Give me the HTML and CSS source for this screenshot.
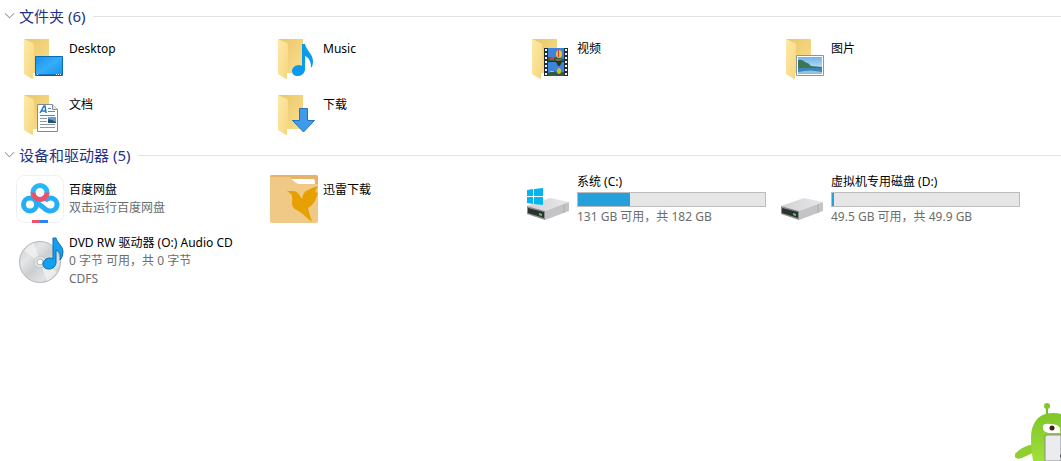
FILE: index.html
```html
<!DOCTYPE html>
<html lang="zh-CN">
<head>
  <meta charset="UTF-8">
  <meta name="viewport" content="width=device-width, initial-scale=1.0">
  <title>此电脑</title>
  <link rel="stylesheet" href="styles.css">
</head>
<body>
  <!-- 共用图形 -->
  <svg class="defs" width="0" height="0" aria-hidden="true">
    <defs>
      <linearGradient id="gBack" x1="0" y1="0" x2="1" y2="1">
        <stop offset="0" stop-color="#e9c566"/>
        <stop offset="1" stop-color="#fbdf8f"/>
      </linearGradient>
      <linearGradient id="gFlap" x1="0" y1="0" x2="1" y2="1">
        <stop offset="0" stop-color="#fdeaa9"/>
        <stop offset="1" stop-color="#f6d67c"/>
      </linearGradient>
      <linearGradient id="gBlue" x1="0" y1="0" x2="1" y2="1">
        <stop offset="0" stop-color="#1590ea"/>
        <stop offset="0.5" stop-color="#35aef8"/>
        <stop offset="1" stop-color="#1391ee"/>
      </linearGradient>
      <linearGradient id="gDisc" x1="0" y1="0" x2="1" y2="1">
        <stop offset="0" stop-color="#c4c7c9"/>
        <stop offset="0.3" stop-color="#e4e5e6"/>
        <stop offset="0.5" stop-color="#cccfd0"/>
        <stop offset="0.75" stop-color="#e0e2e3"/>
        <stop offset="1" stop-color="#adb1b3"/>
      </linearGradient>
      <linearGradient id="gDrive" x1="0" y1="0" x2="1" y2="0">
        <stop offset="0" stop-color="#d2d2d4"/>
        <stop offset="1" stop-color="#e8e8ea"/>
      </linearGradient>
      <linearGradient id="gSky" x1="0" y1="0" x2="0" y2="1">
        <stop offset="0" stop-color="#6fb4ea"/>
        <stop offset="1" stop-color="#e2f2fa"/>
      </linearGradient>
      <linearGradient id="gGreen" x1="0" y1="0" x2="0" y2="1">
        <stop offset="0" stop-color="#7fc62a"/>
        <stop offset="1" stop-color="#a0e038"/>
      </linearGradient>
    </defs>
    <symbol id="folder" viewBox="0 0 48 48">
      <path d="M8 5h25v34H8z" fill="url(#gBack)"/>
      <path d="M8 5l9 4q1 0 1 2v25q0 2-1 3v5q0 1-1 1l-8-5z" fill="url(#gFlap)"/>
    </symbol>
    <symbol id="drive" viewBox="0 0 48 48">
      <path d="M3 31l23-8 19 4-24 9z" fill="url(#gDrive)"/>
      <path d="M21 36l24-9v9l-24 9z" fill="#c4c4c7"/>
      <path d="M40 29v9" stroke="#aeaeb1" fill="none"/>
      <path d="M3 31l18 5v9L3 39z" fill="#8b8d8e"/>
      <path d="M4 33l16 4v6L4 38z" fill="#2b3330"/>
      <path d="M15 38l3 1v2l-3-1z" fill="#4fd66c"/>
    </symbol>
  </svg>

  <main>
    <details class="group" open>
      <summary>
        <svg class="arrow" viewBox="0 0 12 8"><path d="M1 1l5 5 5-5"/></svg>
        <span>文件夹 (6)</span>
      </summary>
      <ul class="items folders">
        <li><a class="item" href="#desktop">
          <svg class="icon" viewBox="0 0 48 48">
            <use href="#folder"/>
            <path d="M19.500 22.500h27v19h-27z" fill="url(#gBlue)" stroke="#0b6ab5"/>
            <path d="M20 41h26" stroke="#0f4f8a" fill="none"/>
            <path d="M21 40.500h2M40 40.500h5" stroke="#fff" stroke-dasharray="1 1" fill="none"/>
          </svg>
          <span class="text"><span class="name">Desktop</span></span>
        </a></li>
        <li><a class="item" href="#music">
          <svg class="icon" viewBox="0 0 48 48">
            <use href="#folder"/>
            <path d="M32 10h3c1 6 8 10 8 17q0 5-2 7c0-7-2-10-6-12v13c0 4-3 7-7 7-4 0-6-2-6-5s3-6 7-6q2 0 3 1z" fill="#0b9bee"/>
          </svg>
          <span class="text"><span class="name">Music</span></span>
        </a></li>
        <li><a class="item" href="#videos">
          <svg class="icon" viewBox="0 0 48 48">
            <use href="#folder"/>
            <path d="M20 14h24v28H20z" fill="#222a33"/>
            <path d="M24 14h16v13H24zM24 28h16v14H24z" fill="#3c83dc"/>
            <path d="M24 23l5 1 3-1 8 2v2H24zM24 39l6-2 4 2 6-1v4H24z" fill="#315d3a"/>
            <ellipse cx="35" cy="20" rx="3" ry="4" fill="#e9c52d"/>
            <path d="M34 16h1v7h-1zM26 24h4v2h-4z" fill="#d8372f"/>
            <path d="M31 25h7l-2 2h-3z" fill="#8c6a2c"/>
            <path d="M32 28h6l-2 4h-2z" fill="#243b32"/>
            <ellipse cx="35" cy="37" rx="2" ry="3" fill="#d7b82b"/>
            <path d="M26 37h4v1h-4z" fill="#e3c134"/>
            <path d="M22 15v27M42 15v27" stroke="#f3f5f7" stroke-width="2" stroke-dasharray="2 2" fill="none"/>
          </svg>
          <span class="text"><span class="name">视频</span></span>
        </a></li>
        <li><a class="item" href="#pictures">
          <svg class="icon" viewBox="0 0 48 48">
            <use href="#folder"/>
            <path d="M18.500 21.500h27v20h-27z" fill="#fff" stroke="#8a979f"/>
            <path d="M20 23h24v17H20z" fill="url(#gSky)"/>
            <path d="M20 26q4-1 7 2 4 1 6 4l11 1v2H20z" fill="#3c7558"/>
            <path d="M20 34h24v6H20z" fill="#3b84b8"/>
            <path d="M20 38q12-3 24 0v2H20z" fill="#8fc0dc"/>
          </svg>
          <span class="text"><span class="name">图片</span></span>
        </a></li>
        <li><a class="item" href="#documents">
          <svg class="icon" viewBox="0 0 48 48">
            <use href="#folder"/>
            <path d="M21.500 14.500h15l5 5v22h-20z" fill="#fff" stroke="#858a8e"/>
            <path d="M36.500 14.500v5h5" fill="#e5e7e8" stroke="#858a8e"/>
            <path d="M24 23l4-7h1l1 7M25 21h5" stroke="#2477bd" stroke-width="1.500" fill="none"/>
            <path d="M32 18.500h3M32 21.500h7M24 25.500h15" stroke="#4a90c4" fill="none"/>
            <path d="M24 28.500h7M24 31.500h7M24 34.500h15M24 37.500h15" stroke="#8c979e" fill="none"/>
            <path d="M32 27h8v6h-8z" fill="#5da3d8"/>
            <path d="M32 29l4 1 4 2v1h-8z" fill="#28506c"/>
          </svg>
          <span class="text"><span class="name">文档</span></span>
        </a></li>
        <li><a class="item" href="#downloads">
          <svg class="icon" viewBox="0 0 48 48">
            <use href="#folder"/>
            <path d="M29.500 18.500h8v12h7l-11 11.500-11-11.500h7z" fill="#3d9be9" stroke="#2272bd"/>
          </svg>
          <span class="text"><span class="name">下载</span></span>
        </a></li>
      </ul>
    </details>

    <details class="group" open>
      <summary>
        <svg class="arrow" viewBox="0 0 12 8"><path d="M1 1l5 5 5-5"/></svg>
        <span>设备和驱动器 (5)</span>
      </summary>
      <ul class="items drives">
        <li><a class="item" href="#baidu">
          <svg class="icon" viewBox="0 0 48 48">
            <rect x="0.500" y="0.500" width="47" height="47" rx="8" fill="#fff" stroke="#f0f0f4"/>
            <g fill="none" stroke-width="5">
              <circle cx="14" cy="29.500" r="6.500" stroke="#25aef3"/>
              <path d="M20 27l8 6q3 3 6 3a6.500 6.500 0 1 0-5-10" stroke="#25aef3"/>
              <circle cx="24" cy="17.500" r="7" stroke="#25b7f7"/>
              <path d="M17 17.500a7 7 0 0 0 14 0" stroke="#f0506e"/>
            </g>
            <path d="M16 45h8v3h-8z" fill="#f0506e"/>
            <path d="M24 45h8v3h-8z" fill="#2b86f5"/>
          </svg>
          <span class="text">
            <span class="name">百度网盘</span>
            <span class="info">双击运行百度网盘</span>
          </span>
        </a></li>
        <li><a class="item" href="#xunlei">
          <svg class="icon" viewBox="0 0 48 48">
            <rect width="48" height="48" rx="2" fill="#f0c987"/>
            <path d="M2 0h44q2 0 2 2v7H28L20 2H0q0-2 2-2z" fill="#e6b468"/>
            <path d="M21 4h22q2 0 2 2v3H29q-2 0-4-2z" fill="#fff"/>
            <path d="M17 16h6q3 0 5 2l4 6q1-6 4-8 5-3 12-5l-3 6 3 1-3 8q-2 4-7 7l1 4 3 10-6-5q-5-5-11-8-3-2-3-6 1-6-1-9z" fill="#e6a000"/>
          </svg>
          <span class="text"><span class="name">迅雷下载</span></span>
        </a></li>
        <li><a class="item" href="#c">
          <svg class="icon" viewBox="0 0 48 48">
            <use href="#drive"/>
            <path d="M3 15l6-1v7H3zM10 14l9-1v8h-9zM3 22h6v7l-6-1zM10 22h9v8l-9-1z" fill="#06b4ee"/>
          </svg>
          <span class="text">
            <span class="name">系统 (C:)</span>
            <span class="bar"><span class="used" style="width: 28%"></span></span>
            <span class="info">131 GB 可用，共 182 GB</span>
          </span>
        </a></li>
        <li><a class="item" href="#d">
          <svg class="icon" viewBox="0 0 48 48"><use href="#drive"/></svg>
          <span class="text">
            <span class="name">虚拟机专用磁盘 (D:)</span>
            <span class="bar"><span class="used" style="width: 1%"></span></span>
            <span class="info">49.5 GB 可用，共 49.9 GB</span>
          </span>
        </a></li>
        <li><a class="item" href="#o">
          <svg class="icon" viewBox="0 0 48 48">
            <circle cx="24" cy="25" r="20.500" fill="url(#gDisc)" stroke="#b4b8ba"/>
            <path d="M24 25L8 14q4-6 10-8zM24 25l17 10q-4 6-10 9z" fill="#f3f4f4" opacity="0.700"/>
            <circle cx="24" cy="25" r="6" fill="#dfe1e2" stroke="#c4c7c9"/>
            <circle cx="24" cy="25" r="3" fill="#fff" stroke="#b4b8ba"/>
            <path d="M37 1h3c1 5 7 8 7 14q0 5-3 8c1-6-1-9-4-10v12c0 4-3 7-7 7-4 0-6-2-6-5s3-6 7-6q2 0 3 1z" fill="#12a0f0" stroke="#0b6db2"/>
          </svg>
          <span class="text">
            <span class="name">DVD RW 驱动器 (O:) Audio CD</span>
            <span class="info">0 字节 可用，共 0 字节</span>
            <span class="info">CDFS</span>
          </span>
        </a></li>
      </ul>
    </details>
  </main>

  <svg class="mascot" viewBox="0 0 46 58" aria-hidden="true">
    <path d="M32 4v10" stroke="#7cb82a" stroke-width="2"/>
    <circle cx="32" cy="3" r="3" fill="#86c32d"/>
    <path d="M19 41Q8 43 2 49q-4 3-1 6 3 2 8-1l11-5z" fill="#8fd02f"/>
    <path d="M18 58Q14 32 18 23q5-13 20-13 5 0 8 1v47z" fill="url(#gGreen)"/>
    <path d="M28 25q-1-5 7-4 8 0 10 4v5H34q-6-1-6-5z" fill="#fff"/>
    <circle cx="37" cy="25" r="2.500" fill="#4a1c10"/>
    <path d="M30 58V34q0-2 2-2h14v26z" fill="#ececf0" stroke="#8a8d90"/>
    <path d="M45 53l1-2v4z" fill="#333"/>
  </svg>
</body>
</html>
```

FILE: styles.css
```css
body {
  margin: 0;
  background: #fff;
  color: #000;
  font-family: "Noto Sans", "Noto Sans CJK SC", sans-serif;
  font-size: 12px;
  line-height: 18px;
}
.defs {
  position: absolute;
}
summary {
  display: flex;
  align-items: center;
  gap: 4px;
  height: 32px;
  padding-left: 4px;
  color: #1e3287;
  font-size: 15px;
  list-style: none;
  cursor: pointer;
}
summary::after {
  content: "";
  flex: 1;
  height: 1px;
  margin-left: 4px;
  background: #e2e2e2;
}
.arrow {
  width: 11px;
  height: 8px;
  fill: none;
  stroke: #6d6d6d;
}
.items {
  display: grid;
  grid-template-columns: repeat(auto-fill, 254px);
  row-gap: 8px;
  margin: 0;
  padding: 2px 0 1px 16px;
  list-style: none;
}
.drives {
  padding-top: 1px;
}
.item {
  display: flex;
  align-items: center;
  gap: 5px;
  color: inherit;
  text-decoration: none;
}
.drives .item {
  height: 54px;
}
.icon {
  flex: none;
  width: 48px;
  height: 48px;
}
.text {
  flex: 1;
  min-height: 36px;
  padding-right: 12px;
}
.name,
.info {
  display: block;
  white-space: nowrap;
}
.info {
  color: #6d6d6d;
}
.bar {
  display: block;
  height: 13px;
  margin: 1px 0;
  border: 1px solid #bcbcbc;
  background: #e6e6e6;
}
.used {
  display: block;
  height: 100%;
  background: #26a0da;
}
.mascot {
  position: fixed;
  right: 0;
  bottom: 0;
  width: 46px;
  height: 58px;
}
```
